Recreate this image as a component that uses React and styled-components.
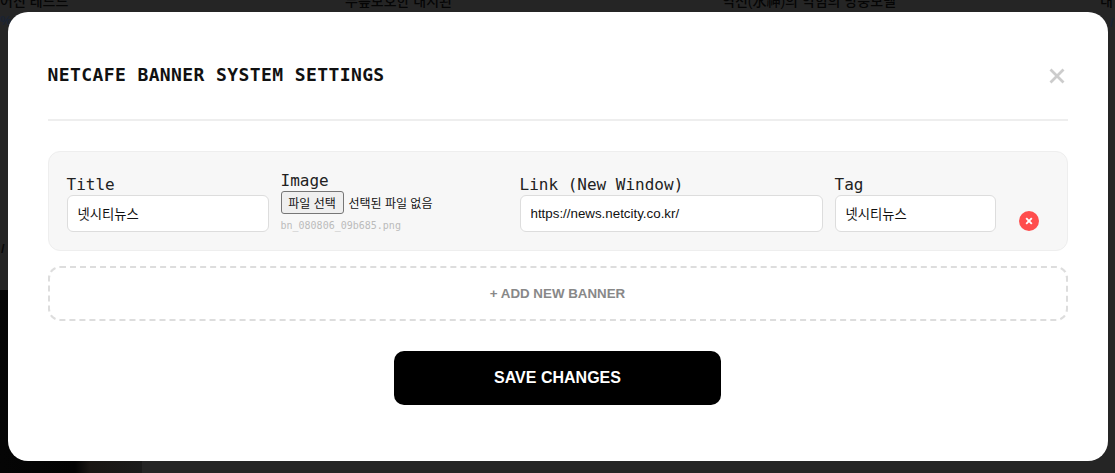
import React from 'react';
import styled, { createGlobalStyle } from 'styled-components';

const Global = createGlobalStyle`
  html, body { margin: 0; padding: 0; height: 100%; background: #252525; overflow: hidden; }
  * { box-sizing: border-box; }
`;
const MONO = `"DejaVu Sans Mono", "Noto Sans CJK KR", monospace`;
const SANS = `"Liberation Sans", "Noto Sans CJK KR", sans-serif`;

const Page = styled.div`
  width: 1115px; height: 473px; position: relative; overflow: hidden; background: #252525;
`;
const Behind = styled.div`
  height: 100%; display: flex; flex-direction: column; justify-content: space-between;
`;
const BehindText = styled.div`
  display: grid; grid-template-columns: 345px 377px 378px 15px; height: 12px; overflow: hidden;
  font-family: ${SANS}; font-size: 14px; font-weight: 500; color: #050505; line-height: 12px; white-space: nowrap;
  & > span { margin-top: -5px; }
`;
const BehindPhoto = styled.div`
  width: 142px; height: 183px;
  background: linear-gradient(90deg, #050505 0, #030303 75px, #1a1613 90px, #1b1b1b 142px);
`;
const Stray = styled.span`
  position: absolute; left: ${p => p.$x}px; top: ${p => p.$y}px; font-family: ${SANS};
  font-size: 13px; line-height: 14px; font-weight: 700; color: ${p => p.$c};
`;
const Backdrop = styled.div`
  position: absolute; inset: 0; display: flex; justify-content: center; padding-top: 12px;
`;
const Modal = styled.div`
  width: 1100px; height: 449px; background: #fff; border-radius: 20px; padding: 40px;
  font-family: ${SANS};
`;
const Header = styled.div`
  display: flex; justify-content: space-between; align-items: center;
  height: 69px; padding-bottom: 23px; border-bottom: 2px solid #eee; margin-bottom: 30px;
`;
const Heading = styled.h2`
  margin: 0; font-family: ${MONO}; font-size: 18px; font-weight: 700; color: #111; letter-spacing: 0.4px;
`;
const Close = styled.button`
  border: 0; background: none; padding: 0; width: 20px; height: 20px; margin: 3px 1px 0 0; color: #ccc; display: flex;
`;
const Row = styled.div`
  height: 100px; display: flex; align-items: flex-end; gap: 12px;
  padding: 0 18px 18px; background: #f7f7f7; border: 1px solid #eee; border-radius: 12px;
`;
const Field = styled.label`
  display: flex; flex-direction: column; width: ${p => p.$w}px; flex: none;
`;
const Label = styled.span`
  font-family: ${MONO}; font-size: 16px; line-height: 19px; color: #222; margin-bottom: 1px;
`;
const Input = styled.input`
  width: 100%; height: 37px; border: 1px solid #ddd; border-radius: 6px; background: #fff;
  padding: 0 10px; font-family: ${SANS}; font-size: 13.33px; color: #111; outline: none;
`;
const FileLine = styled.div`
  display: flex; align-items: center; font-family: ${SANS}; font-size: 12px; color: #111; height: 23px;
`;
const FileButton = styled.span`
  height: 23px; width: 63px; margin-right: 5px; display: flex; align-items: center; justify-content: center;
  background: #efefef; border: 1px solid #767676; border-radius: 3px; font-size: 12px; color: #111;
`;
const FileName = styled.span`
  font-family: ${MONO}; font-size: 10px; line-height: 12px; margin-top: 6px; color: #bbb; height: 12px;
`;
const Remove = styled.button`
  width: 20px; height: 20px; margin: 0 0 1px 11px; border: 0; padding: 0; border-radius: 50%;
  background: #ff4d4d; color: #fff; display: flex; align-items: center; justify-content: center;
`;
const AddButton = styled.button`
  width: 100%; height: 55px; margin-top: 15px; background: #fff; border: 2px dashed #ddd; border-radius: 12px;
  font-family: ${SANS}; font-size: 13.33px; font-weight: 700; color: #888;
`;
const Footer = styled.div`
  display: flex; justify-content: center; margin-top: 30px;
`;
const Save = styled.button`
  width: 327px; height: 54px; background: #000; color: #fff; border: 0; border-radius: 10px;
  font-family: ${SANS}; font-size: 16px; font-weight: 700;
`;

export default function App() {
  return (
    <Page>
      <Global />
      <Behind>
        <BehindText>
          <span>어진 레드드</span>
          <span>무릎보호한 내지된</span>
          <span>역전(水神)의 익힘의 방충모델</span>
          <span>내</span>
        </BehindText>
        <BehindPhoto />
      </Behind>
      <Stray $x={0} $y={14} $c="#1a2333">%</Stray>
      <Stray $x={1} $y={242} $c="#0a0a0a">/</Stray>
      <Stray $x={1110} $y={16} $c="#1a2333">/</Stray>
      <Backdrop>
        <Modal>
          <Header>
            <Heading>NETCAFE BANNER SYSTEM SETTINGS</Heading>
            <Close aria-label="close">
              <svg width="20" height="20" viewBox="0 0 20 20"><path d="M3.5 3.5l13 13M16.5 3.5l-13 13" stroke="currentColor" strokeWidth="2.8" /></svg>
            </Close>
          </Header>
          <Row>
            <Field $w={202}><Label>Title</Label><Input defaultValue="넷시티뉴스" /></Field>
            <Field $w={227}>
              <Label>Image</Label>
              <FileLine><FileButton>파일 선택</FileButton>선택된 파일 없음</FileLine>
              <FileName>bn_080806_09b685.png</FileName>
            </Field>
            <Field $w={303}><Label>Link (New Window)</Label><Input defaultValue="https://news.netcity.co.kr/" /></Field>
            <Field $w={161}><Label>Tag</Label><Input defaultValue="넷시티뉴스" /></Field>
            <Remove aria-label="remove">
              <svg width="8" height="8" viewBox="0 0 8 8"><path d="M1.2 1.2l5.6 5.6M6.8 1.2L1.2 6.8" stroke="currentColor" strokeWidth="1.9" /></svg>
            </Remove>
          </Row>
          <AddButton>+ ADD NEW BANNER</AddButton>
          <Footer><Save>SAVE CHANGES</Save></Footer>
        </Modal>
      </Backdrop>
    </Page>
  );
}
